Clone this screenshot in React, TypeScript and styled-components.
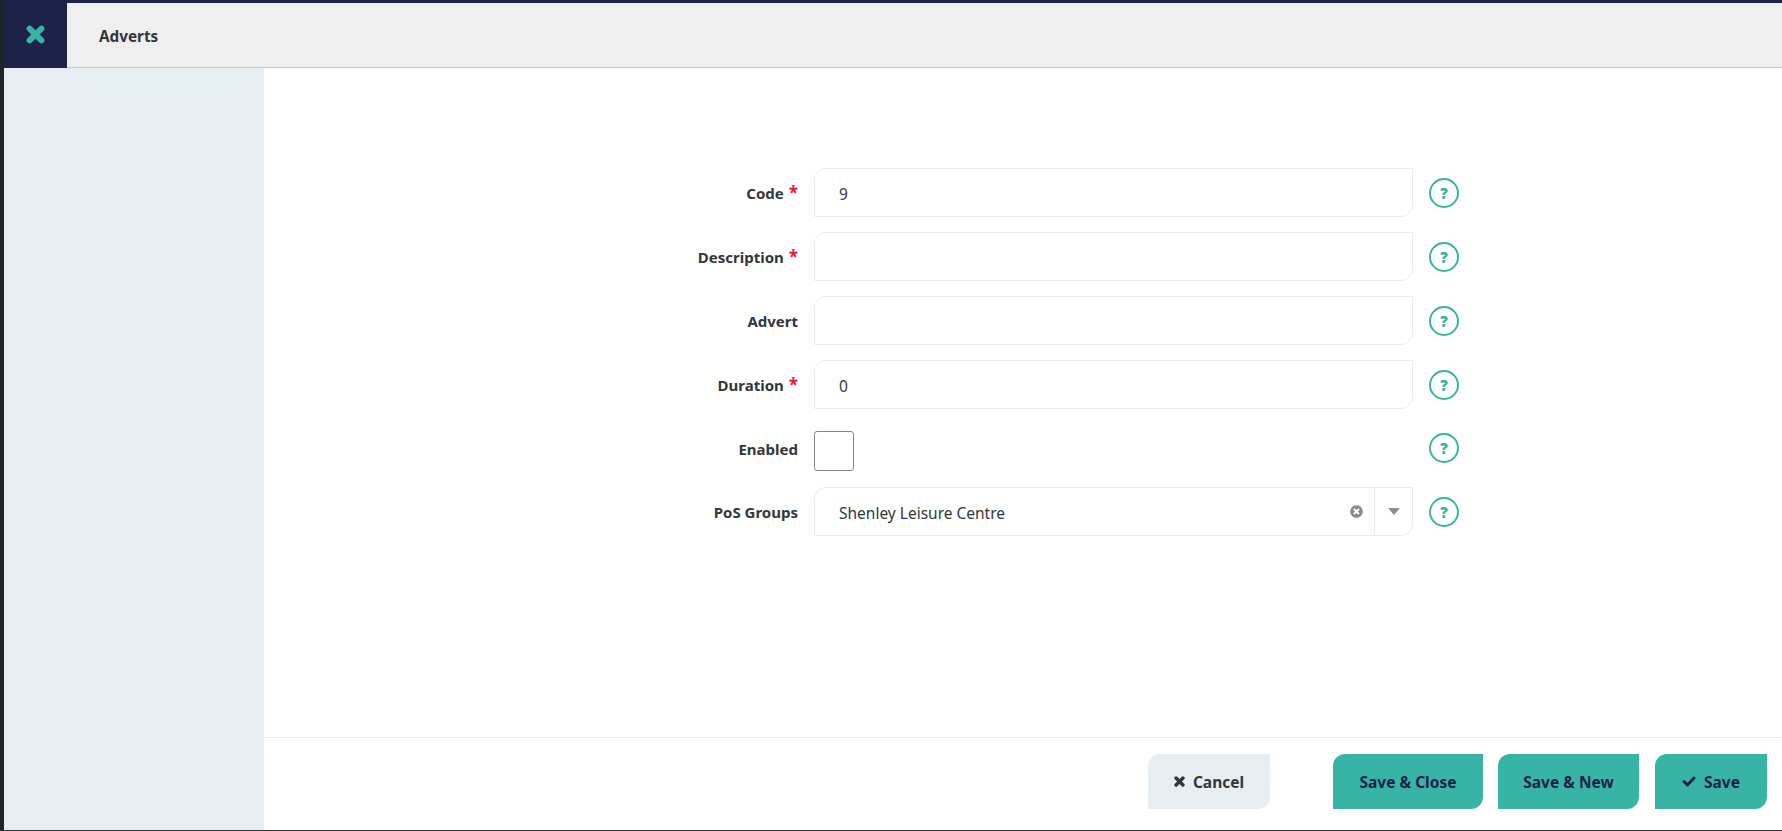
import React from "react";
import styled, { createGlobalStyle } from "styled-components";
import { FaTimesCircle } from "react-icons/fa";

const GlobalStyle = createGlobalStyle`
  html, body {
    margin: 0;
    padding: 0;
    background: #fff;
  }
  body {
    font-family: "Noto Sans", "Open Sans", sans-serif;
    color: #33373d;
  }
`;

const Page = styled.div`
  display: flex;
  flex-direction: column;
  width: 1782px;
  height: 831px;
  box-sizing: border-box;
  overflow: hidden;
  border-left: 4px solid #1e2528;
  border-top: 3px solid #1e2148;
  border-bottom: 1px solid #33373d;
`;

const Header = styled.header`
  display: flex;
  align-items: center;
  height: 65px;
  flex: none;
  background: #efefef;
  border-bottom: 1px solid #c9c9cf;
  box-sizing: border-box;
`;

const CloseTab = styled.div`
  display: flex;
  align-items: center;
  justify-content: center;
  width: 63px;
  height: 65px;
  padding-bottom: 1px;
  box-sizing: border-box;
  background: #1e2148;
  color: #37b4a6;
`;

const Title = styled.h1`
  margin: 2px 0 0 32px;
  font-size: 15.3px;
  font-weight: 700;
`;

const Body = styled.div`
  display: flex;
  flex: 1;
  min-height: 0;
`;

const Sidebar = styled.aside`
  width: 260px;
  flex: none;
  background: #e6eef1;
`;

const Main = styled.main`
  display: flex;
  flex-direction: column;
  flex: 1;
  min-width: 0;
`;

const Form = styled.div`
  flex: 1;
  display: grid;
  grid-template-columns: 534px 599px 30px;
  column-gap: 16px;
  row-gap: 15px;
  align-content: start;
  padding-top: 100px;
`;

const Label = styled.label`
  display: flex;
  align-items: center;
  justify-content: flex-end;
  gap: 5px;
  padding-top: 1px;
  font-size: 15px;
  font-weight: 700;
`;

const Required = styled.span`
  color: #f01830;
  font-size: 17px;
  line-height: 1;
  margin-top: -1px;
`;

const Input = styled.div`
  display: flex;
  align-items: center;
  height: 49px;
  box-sizing: border-box;
  padding-left: 24px;
  border: 1px solid #e6eef1;
  border-radius: 12px 0 12px 0;
  font-size: 15.5px;
`;

const InputValue = styled.span`
  flex: 1;
  padding-top: 2px;
`;

const CheckCell = styled.div`
  display: flex;
  height: 48px;
  box-sizing: border-box;
  padding-bottom: 1px;
  align-items: flex-end;
`;

const CheckBox = styled.div`
  width: 40px;
  height: 40px;
  box-sizing: border-box;
  border: 1px solid #85858f;
  border-radius: 3px;
`;

const ClearIcon = styled(FaTimesCircle)`
  color: #8a8a8a;
  font-size: 13px;
  margin-right: 11px;
`;

const Caret = styled.div`
  display: flex;
  align-items: center;
  justify-content: center;
  width: 37px;
  height: 100%;
  border-left: 1px solid #e6eef1;

  &::after {
    content: "";
    border-left: 6px solid transparent;
    border-right: 6px solid transparent;
    border-top: 7px solid #8f8f8f;
  }
`;

const HelpCell = styled.div`
  display: flex;
  align-items: center;
`;

const Help = styled.span`
  display: flex;
  align-items: center;
  justify-content: center;
  width: 30px;
  height: 30px;
  box-sizing: border-box;
  border: 2px solid #37b4a6;
  border-radius: 50%;
  color: #37b4a6;
  font-size: 15px;
  font-weight: 900;
`;

const Footer = styled.footer`
  display: flex;
  justify-content: flex-end;
  align-items: flex-start;
  height: 93px;
  flex: none;
  box-sizing: border-box;
  padding: 16px 15px 0 0;
  border-top: 1px solid #e6eef1;
`;

const Button = styled.button<{ $primary?: boolean; $width: number; $gap?: number }>`
  display: flex;
  align-items: center;
  justify-content: center;
  gap: 8px;
  width: ${(p) => p.$width}px;
  height: 55px;
  margin-left: ${(p) => p.$gap ?? 15}px;
  border: none;
  border-radius: 12px 0 12px 0;
  background: ${(p) => (p.$primary ? "#37b4a6" : "#e6eef1")};
  color: ${(p) => (p.$primary ? "#1e2148" : "#33373d")};
  font-family: inherit;
  font-size: 15.5px;
  font-weight: 700;
`;

const CrossIcon = ({ size }: { size: number }) => (
  <svg width={size} height={size} viewBox="0 0 16 16" aria-hidden="true">
    <path
      d="M3 3L13 13M13 3L3 13"
      fill="none"
      stroke="currentColor"
      strokeWidth="5"
      strokeLinecap="round"
    />
  </svg>
);

const CheckIcon = () => (
  <svg width="14" height="11" viewBox="0 0 14 11" aria-hidden="true">
    <path
      d="M2 5.5L5.5 9L12 2"
      fill="none"
      stroke="currentColor"
      strokeWidth="3"
      strokeLinecap="round"
      strokeLinejoin="round"
    />
  </svg>
);

const fields = [
  { label: "Code", required: true, value: "9" },
  { label: "Description", required: true, value: "" },
  { label: "Advert", required: false, value: "" },
  { label: "Duration", required: true, value: "0" },
];

const App = () => {
  return (
    <Page>
      <GlobalStyle />
      <Header>
        <CloseTab>
          <CrossIcon size={19} />
        </CloseTab>
        <Title>Adverts</Title>
      </Header>
      <Body>
        <Sidebar />
        <Main>
          <Form>
            {fields.map((f) => (
              <React.Fragment key={f.label}>
                <Label>
                  {f.label}
                  {f.required && <Required>*</Required>}
                </Label>
                <Input>
                  <InputValue>{f.value}</InputValue>
                </Input>
                <HelpCell>
                  <Help>?</Help>
                </HelpCell>
              </React.Fragment>
            ))}
            <Label>Enabled</Label>
            <CheckCell>
              <CheckBox />
            </CheckCell>
            <HelpCell>
              <Help>?</Help>
            </HelpCell>
            <Label>PoS Groups</Label>
            <Input>
              <InputValue>Shenley Leisure Centre</InputValue>
              <ClearIcon />
              <Caret />
            </Input>
            <HelpCell>
              <Help>?</Help>
            </HelpCell>
          </Form>
          <Footer>
            <Button $width={122}>
              <CrossIcon size={11} />
              Cancel
            </Button>
            <Button $primary $width={150} $gap={63}>
              Save &amp; Close
            </Button>
            <Button $primary $width={141}>
              Save &amp; New
            </Button>
            <Button $primary $width={112} $gap={16}>
              <CheckIcon />
              Save
            </Button>
          </Footer>
        </Main>
      </Body>
    </Page>
  );
};

export default App;
